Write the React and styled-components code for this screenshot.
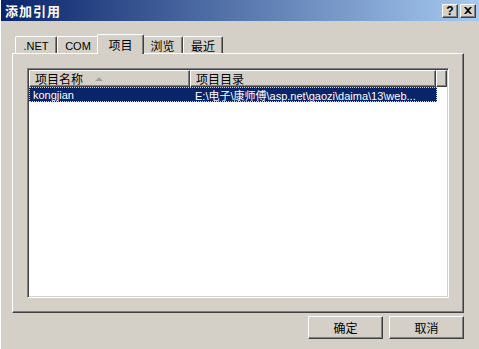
import React from 'react';
import styled, { createGlobalStyle } from 'styled-components';

const Global = createGlobalStyle`
  html, body { margin: 0; padding: 0; background: #d4d0c8; }
  * { box-sizing: border-box; }
`;

const FONT = `"Liberation Sans", "Noto Sans CJK SC", sans-serif`;

const Window = styled.div`
  width: 479px;
  height: 349px;
  background: #d4d0c8;
  display: flex;
  flex-direction: column;
  font-family: ${FONT};
  font-size: 12px;
  color: #000;
  border-left: 1px solid #fff;
  overflow: hidden;
`;

const TitleBar = styled.div`
  height: 21px;
  flex: none;
  display: flex;
  align-items: center;
  justify-content: space-between;
  padding: 0 3px 0 4px;
  background: linear-gradient(to right, #0a246a, #a6caf0);
`;

const Caption = styled.span`
  color: #fff;
  font-weight: bold;
  font-size: 13px;
  letter-spacing: 1px;
  font-family: "Noto Sans CJK SC", sans-serif;
`;

const CaptionButtons = styled.div`
  display: flex;
  gap: 2px;
`;

const CapBtn = styled.div`
  width: 16px;
  height: 14px;
  background: #d4d0c8;
  border-top: 1px solid #fff;
  border-left: 1px solid #fff;
  border-right: 1px solid #404040;
  border-bottom: 1px solid #404040;
  box-shadow: inset -1px -1px 0 #808080;
  display: flex;
  align-items: center;
  justify-content: center;
  font-weight: bold;
  font-size: 12px;
  line-height: 1;
`;

const Body = styled.div`
  flex: 1;
  display: flex;
  flex-direction: column;
  padding: 12px 15px 0 11px;
`;

const TabStrip = styled.div`
  height: 20px;
  display: flex;
  align-items: flex-end;
  padding-left: 3px;
  position: relative;
  z-index: 1;
`;

const Tab = styled.div`
  height: ${p => (p.$active ? 20 : 17)}px;
  margin-bottom: ${p => (p.$active ? -1 : 0)}px;
  padding: 0 ${p => (p.$active ? 8 : 6)}px;
  margin-left: ${p => (p.$active ? -2 : 0)}px;
  margin-right: ${p => (p.$active ? -2 : 0)}px;
  background: #d4d0c8;
  border-top: 1px solid #fff;
  border-left: 1px solid #fff;
  border-right: 1px solid #404040;
  box-shadow: inset -1px 0 0 #808080;
  border-radius: 2px 2px 0 0;
  display: flex;
  align-items: center;
  justify-content: center;
  min-width: ${p => p.$w}px;
  font-size: ${p => (p.$cjk ? 12 : 11)}px;
  font-family: ${p => (p.$cjk ? `"Noto Sans CJK SC", sans-serif` : FONT)};
  padding-top: ${p => (p.$active ? 0 : 1)}px;
  z-index: ${p => (p.$active ? 2 : 1)};
`;

const Panel = styled.div`
  width: 452px;
  height: 260px;
  border-top: 1px solid #fff;
  border-left: 1px solid #fff;
  border-right: 1px solid #404040;
  border-bottom: 1px solid #404040;
  box-shadow: inset -1px -1px 0 #808080;
  padding: 14px;
  display: flex;
`;

const ListView = styled.div`
  flex: 1;
  background: #fff;
  border-top: 1px solid #808080;
  border-left: 1px solid #808080;
  border-right: 1px solid #fff;
  border-bottom: 1px solid #fff;
  box-shadow: inset 1px 1px 0 #404040, inset -1px -1px 0 #d4d0c8;
  padding: 1px;
  display: flex;
  flex-direction: column;
`;

const HeaderRow = styled.div`
  display: flex;
  height: 17px;
`;

const HeaderCell = styled.div`
  width: ${p => p.$w}px;
  flex: ${p => (p.$fill ? 1 : 'none')};
  height: 17px;
  background: #d4d0c8;
  border-top: 1px solid #fff;
  border-left: 1px solid #fff;
  border-right: 1px solid #404040;
  border-bottom: 1px solid #404040;
  box-shadow: inset -1px -1px 0 #808080;
  display: flex;
  align-items: center;
  gap: 12px;
  padding-left: 5px;
  font-family: "Noto Sans CJK SC", sans-serif;
  font-size: 12px;
  white-space: nowrap;
`;

const SortArrow = styled.span`
  width: 0;
  height: 0;
  border-left: 4px solid transparent;
  border-right: 4px solid transparent;
  border-bottom: 4px solid #a0a0a0;
`;

const Row = styled.div`
  display: flex;
  height: 15px;
  margin-top: 0;
  width: 408px;
  background: ${p => (p.$selected ? '#0a246a' : 'transparent')};
  color: ${p => (p.$selected ? '#fff' : '#000')};
  outline: ${p => (p.$selected ? '1px dotted #d4d0c8' : 'none')};
  outline-offset: -1px;
`;

const Cell = styled.div`
  width: ${p => p.$w}px;
  flex: none;
  padding-left: ${p => p.$pad}px;
  display: flex;
  align-items: center;
  white-space: nowrap;
  overflow: hidden;
  font-size: 11px;
  font-family: ${FONT};
`;

const Footer = styled.div`
  display: flex;
  justify-content: flex-end;
  gap: 6px;
  padding-top: 3px;
`;

const Button = styled.div`
  width: 75px;
  height: 23px;
  background: #d4d0c8;
  border-top: 1px solid #fff;
  border-left: 1px solid #fff;
  border-right: 1px solid #404040;
  border-bottom: 1px solid #404040;
  box-shadow: inset -1px -1px 0 #808080;
  display: flex;
  align-items: center;
  justify-content: center;
  font-family: "Noto Sans CJK SC", sans-serif;
  font-size: 12px;
`;

const CloseIcon = () => (
  <svg width="8" height="7" viewBox="0 0 8 7">
    <path d="M0 0 L2 0 L4 2 L6 0 L8 0 L5 3.5 L8 7 L6 7 L4 5 L2 7 L0 7 L3 3.5 Z" fill="#000" />
  </svg>
);

const tabs = [
  { label: '.NET', w: 42 },
  { label: 'COM', w: 42 },
  { label: '项目', w: 47, cjk: true, active: true },
  { label: '浏览', w: 41 },
  { label: '最近', w: 40 },
];

export default function App() {
  return (
    <Window>
      <Global />
      <TitleBar>
        <Caption>添加引用</Caption>
        <CaptionButtons>
          <CapBtn>?</CapBtn>
          <CapBtn><CloseIcon /></CapBtn>
        </CaptionButtons>
      </TitleBar>
      <Body>
        <TabStrip>
          {tabs.map(t => (
            <Tab key={t.label} $w={t.w} $active={t.active} $cjk={t.cjk || /[^\x00-\x7f]/.test(t.label)}>{t.label}</Tab>
          ))}
        </TabStrip>
        <Panel>
          <ListView>
            <HeaderRow>
              <HeaderCell $w={161}>项目名称 <SortArrow /></HeaderCell>
              <HeaderCell $w={246}>项目目录</HeaderCell>
              <HeaderCell $fill />
            </HeaderRow>
            <Row $selected>
              <Cell $w={161} $pad={4}>kongjian</Cell>
              <Cell $w={246} $pad={5}>E:\电子\康师傅\asp.net\gaozi\daima\13\web...</Cell>
            </Row>
          </ListView>
        </Panel>
        <Footer>
          <Button>确定</Button>
          <Button>取消</Button>
        </Footer>
      </Body>
    </Window>
  );
}
